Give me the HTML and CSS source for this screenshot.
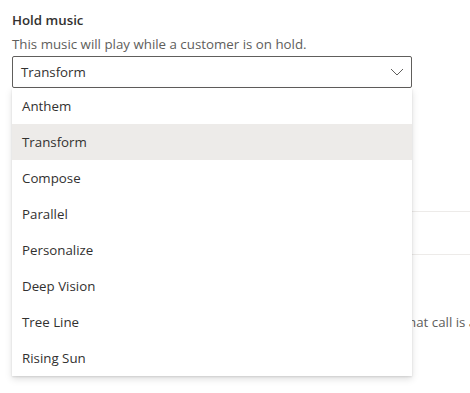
FILE: index.html
```html
<!DOCTYPE html>
<html lang="en">
<head>
  <meta charset="UTF-8">
  <title>Hold music</title>
  <link rel="stylesheet" href="styles.css">
</head>
<body>
  <div class="panel">
    <div class="field">
      <div class="label">Hold music</div>
      <div class="hint">This music will play while a customer is on hold.</div>
      <div class="combo">
        <div class="select">
          <span class="value">Transform</span>
          <svg class="chevron" width="14" height="8" viewBox="0 0 14 8">
            <path d="M1 1 L7 7 L13 1" fill="none" stroke="#605e5c" stroke-width="1"/>
          </svg>
        </div>
        <!-- open list -->
        <ul class="options">
          <li>Anthem</li>
          <li class="selected">Transform</li>
          <li>Compose</li>
          <li>Parallel</li>
          <li>Personalize</li>
          <li>Deep Vision</li>
          <li>Tree Line</li>
          <li>Rising Sun</li>
        </ul>
      </div>
    </div>

    <!-- settings underneath the list -->
    <div class="row first"></div>
    <div class="row"></div>
    <p class="note">When all agents are busy, the customer hears this music until that call is answered.</p>
  </div>
</body>
</html>
```

FILE: styles.css
```css
* {
  margin: 0;
  padding: 0;
  box-sizing: border-box;
}

html,
body {
  min-height: 100vh;
}

body {
  font-family: "Open Sans", "Noto Sans", sans-serif;
  font-size: 13.3px;
  color: #323130;
  background: #fff;
  overflow: hidden;
}

.panel {
  padding: 10px 0 0 12px;
}

.label {
  font-weight: 600;
  line-height: 20px;
}

.hint {
  margin-top: 4px;
  line-height: 20px;
  color: #605e5c;
}

/* combo box */
.combo {
  position: relative;
  width: 400px;
  margin-top: 2px;
}

.select {
  height: 32px;
  border: 1px solid #605e5c;
  border-radius: 2px;
  display: flex;
  align-items: center;
  justify-content: space-between;
  padding: 0 7px 0 8px;
}

.value {
  line-height: 20px;
}

.options {
  list-style: none;
  position: absolute;
  top: 32px;
  left: 0;
  width: 400px;
  background: #fff;
  box-shadow: 0 3.2px 7.2px rgba(0, 0, 0, 0.13), 0 0.6px 1.8px rgba(0, 0, 0, 0.11);
  z-index: 2;
}

.options li {
  height: 36px;
  line-height: 36px;
  padding-left: 10px;
}

.options .selected {
  background: #edebe9;
}

/* rows behind the list */
.row {
  height: 43px;
  border-bottom: 1px solid #edebe9;
}

.row.first {
  height: 124px;
}

.note {
  margin-top: 57px;
  line-height: 20px;
  color: #605e5c;
  white-space: nowrap;
  text-indent: 8px;
}
```
